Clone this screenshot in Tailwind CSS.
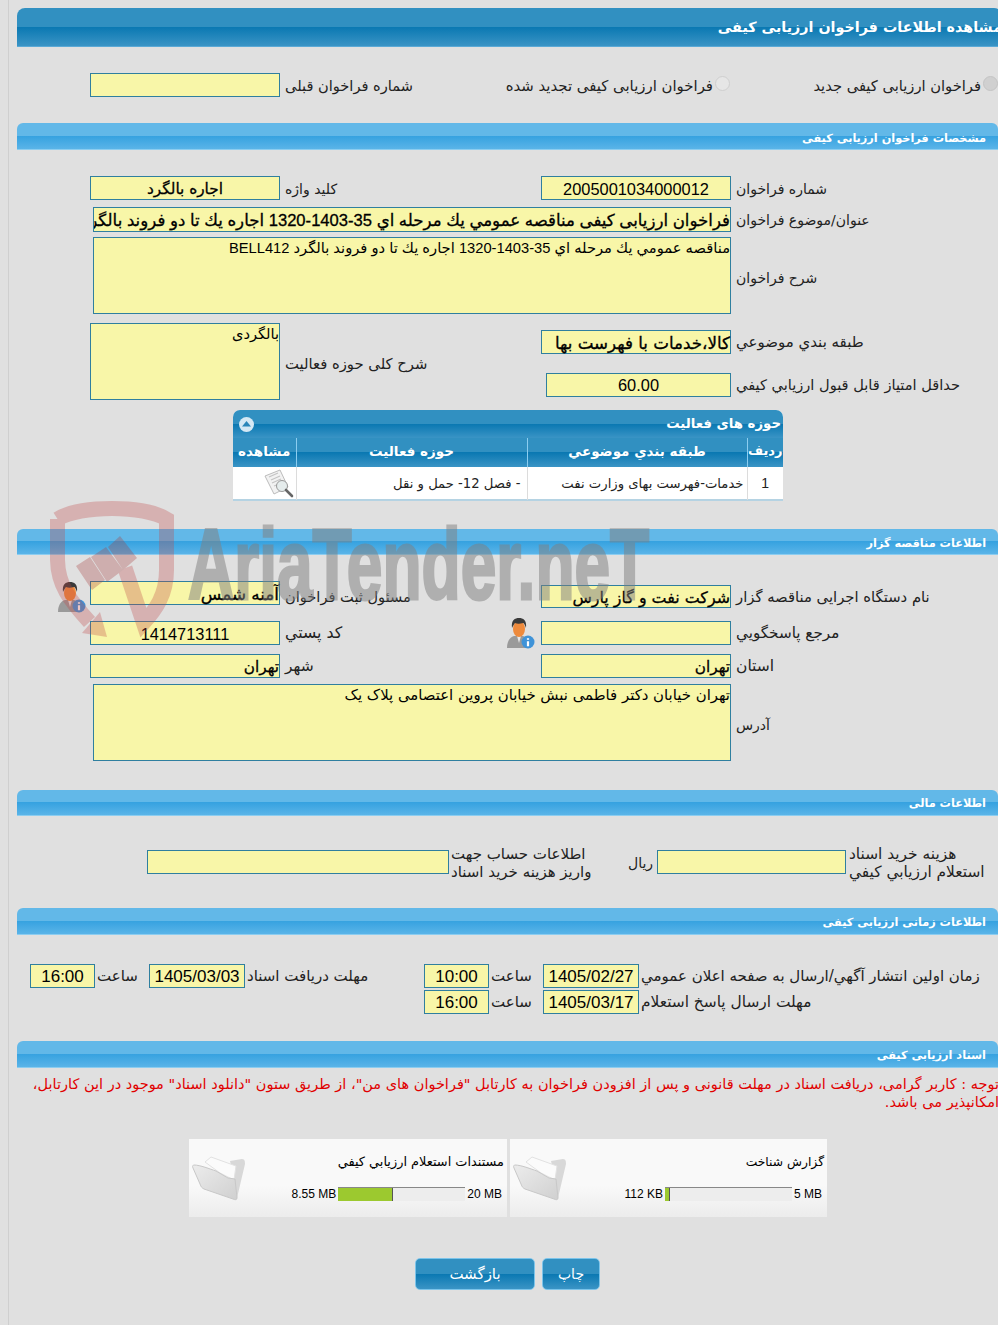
<!doctype html>
<html lang="fa">
<head>
  <meta charset="utf-8">
  <title>مشاهده اطلاعات فراخوان ارزیابی کیفی</title>
  <script src="https://cdn.jsdelivr.net/npm/@tailwindcss/browser@4"></script>
</head>
<body class="relative h-[1325px] overflow-hidden bg-[linear-gradient(90deg,#e0e0e0_8px,#cfcfcf_8px,#cfcfcf_9px,#e0e0e0_9px)] font-['DejaVu_Sans',sans-serif] text-[14px] text-[#222]">

  <!-- page title -->
  <div dir="rtl" class="ml-[17px] mt-[8px] h-[39px] rounded-t-[8px] border-b border-[#5aa9d6] bg-[linear-gradient(180deg,#3190c1_0,#3190c1_49%,#0a78b2_50%,#3a94c5_100%)] -mr-[4px] pt-[9px] text-[14.3px] font-bold leading-[20px] text-white">مشاهده اطلاعات فراخوان ارزیابی کیفی</div>

  <!-- radios -->
  <div class="grid h-[76px] grid-cols-[90px_190px_223px_227px_1fr] pt-[26px]">
    <div></div>
    <div class="h-[24px] border border-[#2f7f9f] bg-[#f8f6a8]"></div>
    <div dir="rtl" class="pl-[5px] text-left text-[14.6px] leading-[26px]">شماره فراخوان قبلی</div>
    <div dir="rtl" class="flex items-start gap-[2px] text-[14.9px] leading-[26px]">
      <span class="mt-[3px] size-[15px] shrink-0 rounded-full border border-[#cfcfcf] bg-[#e6e6e6]"></span>
      <span class="whitespace-nowrap">فراخوان ارزیابی کیفی تجدید شده</span>
    </div>
    <div dir="rtl" class="flex items-start gap-[2px] text-[14.7px] leading-[26px]">
      <span class="mt-[3px] size-[15px] shrink-0 rounded-full border border-[#c4c4c4] bg-[#d0d0d0]"></span>
      <span class="whitespace-nowrap">فراخوان ارزیابی کیفی جدید</span>
    </div>
  </div>

  <!-- section: details -->
  <div dir="rtl" class="ml-[17px] h-[27px] rounded-t-[6px] border-b border-[#8ccdf0] bg-[linear-gradient(180deg,#62b8e8_0,#62b8e8_49%,#36a2e0_50%,#5ab4e8_100%)] pr-[12px] text-[11.3px] font-bold leading-[31px] text-white">مشخصات فراخوان ارزیابی کیفی</div>

  <div class="mt-[26px] grid h-[24px] grid-cols-[90px_190px_261px_190px_1fr]">
    <div></div>
    <div dir="rtl" class="h-[24px] border border-[#2f7f9f] bg-[#f8f6a8] text-center text-[15.3px] leading-[24px] text-black [-webkit-text-stroke:0.3px_#000]">اجاره بالگرد</div>
    <div dir="rtl" class="pl-[5px] text-left leading-[26px]">کلید واژه</div>
    <div class="h-[24px] border border-[#2f7f9f] bg-[#f8f6a8] text-center font-['Liberation_Sans'] text-[16.4px] leading-[24px] text-black">2005001034000012</div>
    <div dir="rtl" class="pl-[5px] text-left leading-[26px]">شماره فراخوان</div>
  </div>
  <div class="mt-[7px] flex h-[25px]">
    <div dir="rtl" class="ml-[93px] h-[25px] w-[638px] overflow-hidden whitespace-nowrap border border-[#2f7f9f] bg-[#f8f6a8] font-['Liberation_Sans','DejaVu_Sans',sans-serif] text-[16.6px] leading-[25px] text-black [-webkit-text-stroke:0.3px_#000]">فراخوان ارزیابی کیفی مناقصه عمومي يك مرحله اي 35-1403-1320 اجاره يك تا دو فروند بالگرد BELL412</div>
    <div dir="rtl" class="pl-[5px] leading-[26px]">عنوان/موضوع فراخوان</div>
  </div>
  <div class="mt-[5px] flex h-[77px]">
    <div dir="rtl" class="ml-[93px] h-[77px] w-[638px] border border-[#2f7f9f] bg-[#f8f6a8] font-['Liberation_Sans','DejaVu_Sans',sans-serif] text-[14.7px] leading-[20px] text-black">مناقصه عمومي يك مرحله اي 35-1403-1320 اجاره يك تا دو فروند بالگرد BELL412</div>
    <div dir="rtl" class="pl-[5px] leading-[82px]">شرح فراخوان</div>
  </div>

  <div class="mt-[9px] grid h-[77px] grid-cols-[90px_190px_256px_195px_1fr]">
    <div></div>
    <div dir="rtl" class="h-[77px] border border-[#2f7f9f] bg-[#f8f6a8] text-[14.6px] leading-[20px] text-black">بالگردی</div>
    <div dir="rtl" class="pl-[5px] text-left text-[14.8px] leading-[82px]">شرح کلی حوزه فعالیت</div>
    <div class="flex flex-col items-end pt-[7px]">
      <div dir="rtl" class="h-[24px] w-[190px] border border-[#2f7f9f] bg-[#f8f6a8] text-[16.7px] leading-[24px] text-black [-webkit-text-stroke:0.3px_#000]">کالا،خدمات با فهرست بها</div>
      <div class="mt-[19px] h-[24px] w-[185px] border border-[#2f7f9f] bg-[#f8f6a8] text-center font-['Liberation_Sans'] text-[16.4px] leading-[23px] text-black">60.00</div>
    </div>
    <div dir="rtl" class="pl-[5px] text-left text-[14.6px]">
      <div class="pt-[6px] text-[15px] leading-[26px]">طبقه بندي موضوعي</div>
      <div class="mt-[17px] leading-[26px]">حداقل امتياز قابل قبول ارزيابي كيفي</div>
    </div>
  </div>

  <!-- activities table -->
  <div class="ml-[233px] mt-[10px] h-[91px] w-[550px] rounded-t-[7px] border-b-2 border-[#b5d3e3] bg-white">
    <div dir="rtl" class="flex h-[28px] items-center justify-between rounded-t-[7px] bg-[linear-gradient(180deg,#3190c1_0,#3190c1_49%,#0a78b2_50%,#3a94c5_100%)] pl-[6px] pr-[2px] text-[13.3px] font-bold text-white">
      <span>حوزه های فعالیت</span>
      <span class="flex size-[15px] items-center justify-center rounded-full bg-[#d5e8f4]">
        <svg width="9" height="6" viewBox="0 0 9 6"><path d="M4.5 0 9 5.5H0z" fill="#2b86b9"/></svg>
      </span>
    </div>
    <table dir="rtl" class="w-full table-fixed border-collapse">
      <thead>
        <tr class="h-[29px] bg-[linear-gradient(180deg,#3190c1_0,#3190c1_49%,#0a78b2_50%,#3a94c5_100%)] text-[13.5px] font-bold leading-[22px] text-white">
          <th class="w-[36px] border-l border-[#8ccdf0] pb-[4px] text-[13px] font-bold">رديف</th>
          <th class="w-[220px] border-l border-[#8ccdf0] pb-[4px] font-bold">طبقه بندي موضوعي</th>
          <th class="border-l border-[#8ccdf0] pb-[4px] font-bold">حوزه فعالیت</th>
          <th class="w-[63px] pb-[4px] font-bold">مشاهده</th>
        </tr>
      </thead>
      <tbody>
        <tr class="h-[33px] text-[13.2px]">
          <td class="border-l border-[#dcdcdc] text-center font-['Liberation_Sans'] text-[14px]">1</td>
          <td class="border-l border-[#dcdcdc] pr-[3px] text-right">خدمات-فهرست بهای وزارت نفت</td>
          <td class="border-l border-[#dcdcdc] pr-[6px] text-right">- فصل 12- حمل و نقل</td>
          <td>
            <svg class="ml-auto mr-[1px]" width="32" height="30" viewBox="0 0 32 30">
              <path d="M2 7 17 1l8 17-14 7z" fill="#f2f2f2" stroke="#bcbcbc"/>
              <path d="M6 8l9-4M8 11l9-4M9 14l9-4M11 17l5-2" stroke="#c4c4c4" stroke-width="1.2"/>
              <circle cx="19" cy="17" r="5.5" fill="#e5ecec" stroke="#999"/>
              <path d="M23 21l6 6" stroke="#666" stroke-width="2.6" stroke-linecap="round"/>
            </svg>
          </td>
        </tr>
      </tbody>
    </table>
  </div>

  <!-- section: tender organiser -->
  <div dir="rtl" class="ml-[17px] mt-[28px] h-[26px] rounded-t-[6px] border-b border-[#8ccdf0] bg-[linear-gradient(180deg,#62b8e8_0,#62b8e8_49%,#36a2e0_50%,#5ab4e8_100%)] pr-[12px] text-[11.3px] font-bold leading-[29px] text-white">اطلاعات مناقصه گزار</div>

  <div class="mt-[26px] grid h-[27px] grid-cols-[56px_34px_190px_261px_190px_1fr]">
    <div></div>
    <div>
      <svg width="30" height="32" viewBox="0 0 30 32">
        <path d="M2 31c0-7 3-11 7-12h9c4 1 6 5 6 12z" fill="#9a9a9a"/>
        <path d="M12 19l2 7 2-7z" fill="#e8e8e8"/>
        <ellipse cx="14" cy="12" rx="6" ry="8" fill="#ee8a3c"/>
        <path d="M7 11C6 3 10 1 14 1s8 2 7 10c-1-3-2-5-3-5-3 1-6 1-8 0-1 1-2 3-3 5z" fill="#3a3a3a"/>
        <circle cx="23" cy="25" r="6.5" fill="#3f93d8"/>
        <path d="M23 21.3v1.5M23 24.3v5" stroke="#fff" stroke-width="2.2"/>
      </svg>
    </div>
    <div dir="rtl" class="h-[24px] border border-[#2f7f9f] bg-[#f8f6a8] text-[16.8px] leading-[24px] text-black [-webkit-text-stroke:0.3px_#000]">آمنه شمس</div>
    <div dir="rtl" class="pl-[5px] text-left text-[14.6px] leading-[31px]">مسئول ثبت فراخوان</div>
    <div dir="rtl" class="mt-[4px] h-[23px] border border-[#2f7f9f] bg-[#f8f6a8] text-[15.9px] leading-[24px] text-black [-webkit-text-stroke:0.3px_#000]">شرکت نفت و گاز پارس</div>
    <div dir="rtl" class="pl-[5px] text-left text-[14.8px] leading-[31px]">نام دستگاه اجرایی مناقصه گزار</div>
  </div>
  <div class="mt-[13px] grid h-[24px] grid-cols-[90px_190px_225px_36px_190px_1fr]">
    <div></div>
    <div class="h-[24px] border border-[#2f7f9f] bg-[#f8f6a8] text-center font-['Liberation_Sans'] text-[16.4px] leading-[24px] text-black">1414713111</div>
    <div dir="rtl" class="pl-[5px] text-left text-[15.8px] leading-[24px]">کد پستي</div>
    <div>
      <svg class="-mt-[4px]" width="30" height="32" viewBox="0 0 30 32">
        <path d="M2 31c0-7 3-11 7-12h9c4 1 6 5 6 12z" fill="#9a9a9a"/>
        <path d="M12 19l2 7 2-7z" fill="#e8e8e8"/>
        <ellipse cx="14" cy="12" rx="6" ry="8" fill="#ee8a3c"/>
        <path d="M7 11C6 3 10 1 14 1s8 2 7 10c-1-3-2-5-3-5-3 1-6 1-8 0-1 1-2 3-3 5z" fill="#3a3a3a"/>
        <circle cx="23" cy="25" r="6.5" fill="#3f93d8"/>
        <path d="M23 21.3v1.5M23 24.3v5" stroke="#fff" stroke-width="2.2"/>
      </svg>
    </div>
    <div class="h-[24px] border border-[#2f7f9f] bg-[#f8f6a8]"></div>
    <div dir="rtl" class="pl-[5px] text-left text-[15.2px] leading-[24px]">مرجع پاسخگویي</div>
  </div>
  <div class="mt-[9px] grid h-[24px] grid-cols-[90px_190px_261px_190px_1fr]">
    <div></div>
    <div dir="rtl" class="h-[24px] border border-[#2f7f9f] bg-[#f8f6a8] text-[15.3px] leading-[25px] text-black [-webkit-text-stroke:0.3px_#000]">تهران</div>
    <div dir="rtl" class="pl-[5px] text-left text-[15.5px] leading-[25px]">شهر</div>
    <div dir="rtl" class="h-[24px] border border-[#2f7f9f] bg-[#f8f6a8] text-[15.3px] leading-[25px] text-black [-webkit-text-stroke:0.3px_#000]">تهران</div>
    <div dir="rtl" class="pl-[5px] text-left text-[15.5px] leading-[25px]">استان</div>
  </div>
  <div class="mt-[6px] flex h-[77px]">
    <div dir="rtl" class="ml-[93px] h-[77px] w-[638px] border border-[#2f7f9f] bg-[#f8f6a8] text-[14.9px] leading-[20px] text-black">تهران خیابان دکتر فاطمی نبش خیابان پروین اعتصامی پلاک یک</div>
    <div dir="rtl" class="pl-[5px] leading-[82px]">آدرس</div>
  </div>

  <!-- section: financial -->
  <div dir="rtl" class="ml-[17px] mt-[29px] h-[26px] rounded-t-[6px] border-b border-[#8ccdf0] bg-[linear-gradient(180deg,#62b8e8_0,#62b8e8_49%,#36a2e0_50%,#5ab4e8_100%)] pr-[12px] text-[11.3px] font-bold leading-[27px] text-white">اطلاعات مالی</div>

  <div class="mt-[34px] grid h-[34px] grid-cols-[147px_302px_179px_29px_189px_1fr] text-[15px]">
    <div></div>
    <div class="h-[24px] border border-[#2f7f9f] bg-[#f8f6a8]"></div>
    <div dir="rtl" class="-mt-[5px] pl-[2px] text-left leading-[18px]">اطلاعات حساب جهت<br>واریز هزینه خرید اسناد</div>
    <div dir="rtl" class="text-left text-[14px] leading-[26px]">ریال</div>
    <div class="h-[24px] border border-[#2f7f9f] bg-[#f8f6a8]"></div>
    <div dir="rtl" class="-mt-[5px] pl-[3px] text-left text-[15.4px] leading-[18px]">هزینه خرید اسناد<br>استعلام ارزيابي كيفي</div>
  </div>

  <!-- section: timing -->
  <div dir="rtl" class="ml-[17px] mt-[24px] h-[27px] rounded-t-[6px] border-b border-[#8ccdf0] bg-[linear-gradient(180deg,#62b8e8_0,#62b8e8_49%,#36a2e0_50%,#5ab4e8_100%)] pr-[12px] text-[11.3px] font-bold leading-[29px] text-white">اطلاعات زمانی ارزیابی کیفی</div>

  <div class="mt-[29px] grid h-[24px] grid-cols-[30px_65px_54px_96px_179px_65px_54px_96px_1fr] text-[15px]">
    <div></div>
    <div class="h-[24px] border border-[#2f7f9f] bg-[#f8f6a8] text-center font-['Liberation_Sans'] text-[17px] leading-[24px] text-black">16:00</div>
    <div dir="rtl" class="pl-[2px] text-left leading-[25px]">ساعت</div>
    <div class="h-[24px] border border-[#2f7f9f] bg-[#f8f6a8] text-center font-['Liberation_Sans'] text-[17px] leading-[24px] text-black">1405/03/03</div>
    <div dir="rtl" class="pl-[2px] text-left leading-[25px]">مهلت دریافت اسناد</div>
    <div class="h-[24px] border border-[#2f7f9f] bg-[#f8f6a8] text-center font-['Liberation_Sans'] text-[17px] leading-[24px] text-black">10:00</div>
    <div dir="rtl" class="pl-[2px] text-left leading-[25px]">ساعت</div>
    <div class="h-[24px] border border-[#2f7f9f] bg-[#f8f6a8] text-center font-['Liberation_Sans'] text-[17px] leading-[24px] text-black">1405/02/27</div>
    <div dir="rtl" class="pl-[2px] text-left leading-[25px]">زمان اولین انتشار آگهي/ارسال به صفحه اعلان عمومي</div>
  </div>
  <div class="mt-[2px] grid h-[24px] grid-cols-[424px_65px_54px_96px_1fr] text-[15px]">
    <div></div>
    <div class="h-[24px] border border-[#2f7f9f] bg-[#f8f6a8] text-center font-['Liberation_Sans'] text-[17px] leading-[24px] text-black">16:00</div>
    <div dir="rtl" class="pl-[2px] text-left leading-[25px]">ساعت</div>
    <div class="h-[24px] border border-[#2f7f9f] bg-[#f8f6a8] text-center font-['Liberation_Sans'] text-[17px] leading-[24px] text-black">1405/03/17</div>
    <div dir="rtl" class="pl-[2px] text-left text-[15.4px] leading-[25px]">مهلت ارسال پاسخ استعلام</div>
  </div>

  <!-- section: documents -->
  <div dir="rtl" class="ml-[17px] mt-[27px] h-[27px] rounded-t-[6px] border-b border-[#8ccdf0] bg-[linear-gradient(180deg,#62b8e8_0,#62b8e8_49%,#36a2e0_50%,#5ab4e8_100%)] pr-[12px] text-[11.3px] font-bold leading-[30px] text-white">اسناد ارزیابی کیفی</div>

  <p dir="rtl" class="-mr-[1px] ml-[30px] mt-[7px] h-[64px] text-[14.5px] leading-[18px] text-[#e00000]">توجه : کاربر گرامی، دریافت اسناد در مهلت قانونی و پس از افزودن فراخوان به کارتابل "فراخوان های من"، از طریق ستون "دانلود اسناد" موجود در این کارتابل، امکانپذیر می باشد.</p>

  <div class="ml-[189px] flex gap-[3px]">
    <div class="flex h-[78px] w-[318px] bg-[linear-gradient(180deg,#f9f9f9_0,#f9f9f9_60%,#ececec_100%)]">
      <svg class="ml-[3px] mt-[17px] shrink-0" width="54" height="46" viewBox="0 0 54 46">
        <defs><linearGradient id="pocket" x1="0" y1="0" x2="1" y2="1"><stop offset="0" stop-color="#ececec"/><stop offset="1" stop-color="#d0d0d0"/></linearGradient></defs>
        <path d="M38 5 50 3c3 0 3 3 3 5l-8 34-3-20z" fill="#d8d8d8"/>
        <path d="M13 6l6-5 25 9-2 14-14-7z" fill="#fbfbfb" stroke="#e2e2e2"/>
        <path d="M2 9c6 0 16 4 22 6l12 7 7 1 2 19c0 2-2 2-4 1L12 33c-2-1-3-2-4-5L1 12C0 10 1 9 2 9z" fill="url(#pocket)" stroke="#c8c8c8"/>
      </svg>
      <div class="flex-1 pr-[3px]">
        <div dir="rtl" class="mt-[13px] h-[20px] text-[12.9px] leading-[20px] text-black">مستندات استعلام ارزيابي كيفي</div>
        <div class="mt-[15px] flex h-[14px] items-center justify-end gap-[2px] font-['Liberation_Sans'] text-[12px] text-black">
          <span>8.55 MB</span>
          <div class="h-[14px] w-[127px] border-t border-[#888] bg-[#ededed]"><div class="h-[13px] w-[55px] border-r border-[#555] bg-[#9cc92f]"></div></div>
          <span class="pr-[2px]">20 MB</span>
        </div>
      </div>
    </div>
    <div class="flex h-[78px] w-[317px] bg-[linear-gradient(180deg,#f9f9f9_0,#f9f9f9_60%,#ececec_100%)]">
      <svg class="ml-[3px] mt-[17px] shrink-0" width="54" height="46" viewBox="0 0 54 46">
        <path d="M38 5 50 3c3 0 3 3 3 5l-8 34-3-20z" fill="#d8d8d8"/>
        <path d="M13 6l6-5 25 9-2 14-14-7z" fill="#fbfbfb" stroke="#e2e2e2"/>
        <path d="M2 9c6 0 16 4 22 6l12 7 7 1 2 19c0 2-2 2-4 1L12 33c-2-1-3-2-4-5L1 12C0 10 1 9 2 9z" fill="url(#pocket)" stroke="#c8c8c8"/>
      </svg>
      <div class="flex-1 pr-[3px]">
        <div dir="rtl" class="mt-[13px] h-[20px] text-[12.3px] leading-[20px] text-black">گزارش شناخت</div>
        <div class="mt-[15px] flex h-[14px] items-center justify-end gap-[2px] font-['Liberation_Sans'] text-[12px] text-black">
          <span>112 KB</span>
          <div class="h-[14px] w-[127px] border-t border-[#888] bg-[#ededed]"><div class="h-[13px] w-[5px] border-r border-[#555] bg-[#9cc92f]"></div></div>
          <span class="pr-[2px]">5 MB</span>
        </div>
      </div>
    </div>
  </div>

  <!-- buttons -->
  <div class="ml-[415px] mt-[41px] flex gap-[7px]">
    <button dir="rtl" class="h-[32px] w-[120px] rounded-[5px] border border-[#7cc4ea] bg-[linear-gradient(180deg,#3190c1_0,#3190c1_49%,#0a78b2_50%,#3a94c5_100%)] text-[15px] text-white">بازگشت</button>
    <button dir="rtl" class="h-[32px] w-[58px] rounded-[5px] border border-[#7cc4ea] bg-[linear-gradient(180deg,#3190c1_0,#3190c1_49%,#0a78b2_50%,#3a94c5_100%)] text-[14px] text-white">چاپ</button>
  </div>

  <!-- watermark -->
  <div class="pointer-events-none absolute left-[50px] top-[500px] z-10">
    <svg width="125" height="140" viewBox="0 0 125 140" fill="none">
      <g opacity=".3">
        <path d="M7.5 19C30 5 94 5 116.5 19V70c0 25-11 40-23 53L75 68" stroke="#c04848" stroke-width="15"/>
        <path d="M7.5 19V60c.5 25 12 40 32 62" stroke="#c04848" stroke-width="15"/>
        <path d="M32 133 50 112l7 25z" fill="#c04848"/>
        <path d="M58 47 70 36 87 58 73 70zM41 57l15-10 17 23-16 12zM26 66l14-9 15 23-13 10z" fill="#a83c3c"/>
      </g>
    </svg>
  </div>
  <div class="pointer-events-none absolute left-[188px] top-[507px] z-10 origin-top-left scale-x-[.64] whitespace-nowrap font-['Liberation_Sans'] text-[100px] font-bold leading-[115px] text-[#808080] opacity-50 [-webkit-text-stroke:3px_#808080]">AriaTender.neT</div>
</body>
</html>
